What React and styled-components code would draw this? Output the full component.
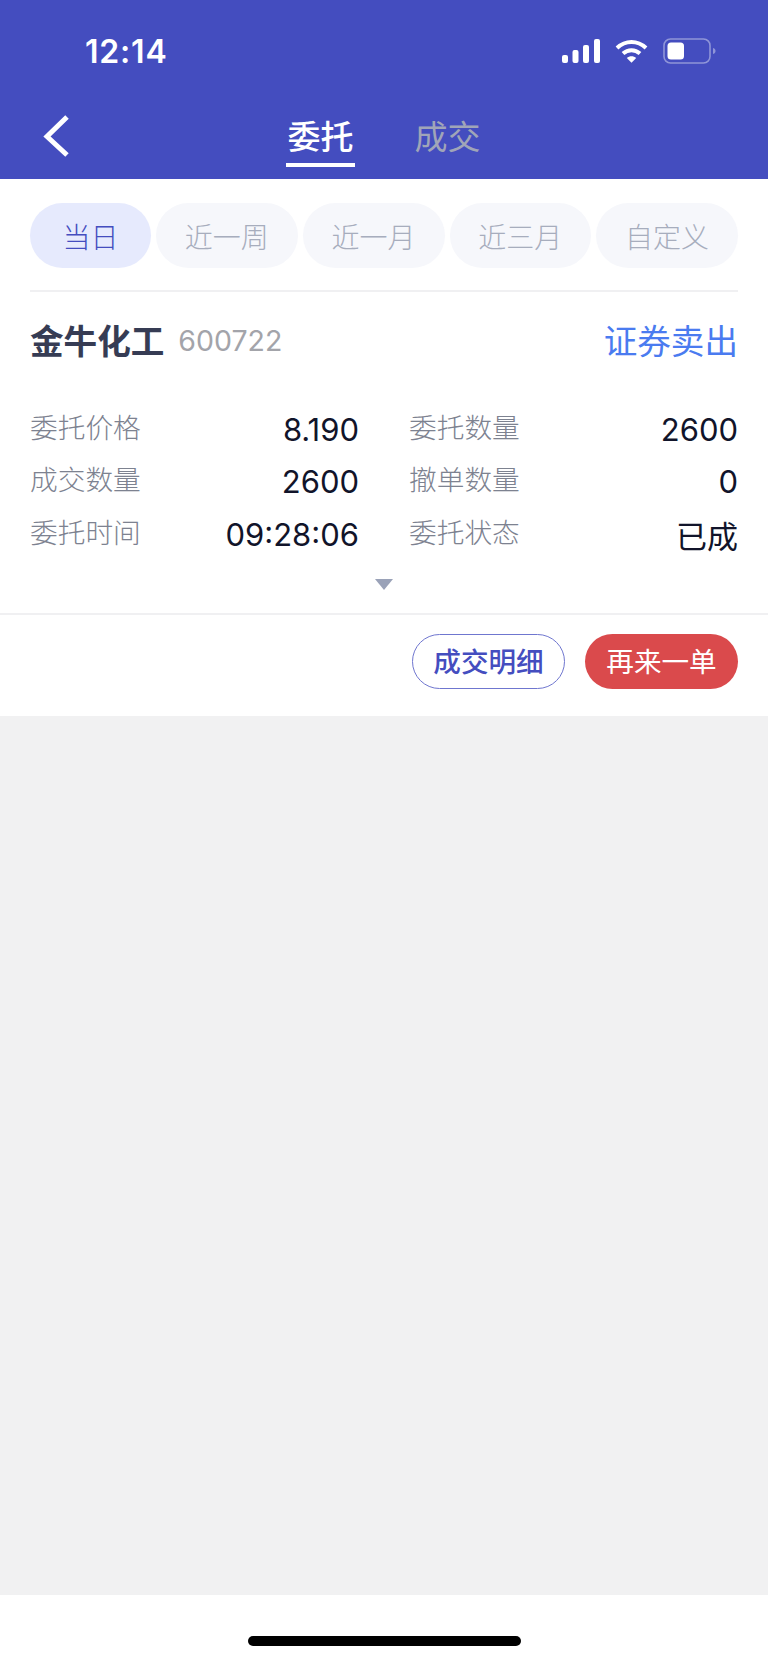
import React from "react";
import styled, { createGlobalStyle } from "styled-components";

const Global = createGlobalStyle`
  html, body { margin: 0; padding: 0; background: #fff; }
  * { box-sizing: border-box; }
  body { font-family: Inter, "Noto Sans CJK SC", sans-serif; }
`;

const Page = styled.div`
  width: 768px;
  height: 1663px;
  display: flex;
  flex-direction: column;
  background: #fff;
  overflow: hidden;
`;
const Header = styled.header`
  height: 179px;
  background: #444dbf;
  flex: none;
  display: flex;
  flex-direction: column;
`;
const StatusBar = styled.div`
  height: 102px;
  padding: 31px 52px 0 85px;
  display: flex;
  justify-content: space-between;
  align-items: flex-start;
`;
const Time = styled.div`
  color: #fff;
  font-size: 32px;
  line-height: 42px;
  font-weight: 600;
  letter-spacing: 0.8px;
`;
const StatusIcons = styled.div`
  display: flex;
  align-items: center;
  gap: 15px;
  height: 26px;
  margin-top: 7px;
`;
const NavBar = styled.nav`
  position: relative;
  flex: 1;
  display: flex;
  justify-content: center;
`;
const BackIcon = styled.svg`
  position: absolute;
  left: 42px;
  top: 12px;
`;
const Tabs = styled.div`
  display: flex;
  gap: 58px;
  margin-left: 0;
`;
const Tab = styled.div`
  width: 69px;
  height: 65px;
  padding-top: 9px;
  text-align: center;
  font-family: "Noto Sans CJK SC", sans-serif;
  font-size: 33px;
  line-height: 48px;
  font-weight: ${(p) => (p.$active ? 500 : 400)};
  color: ${(p) => (p.$active ? "#fff" : "#a0a5b8")};
  border-bottom: 4px solid ${(p) => (p.$active ? "#fff" : "transparent")};
`;
const Filters = styled.div`
  margin: 24px 30px 0;
  padding-bottom: 22px;
  border-bottom: 2px solid #f0f0f2;
  display: flex;
  gap: 5px;
`;
const Pill = styled.div`
  flex: ${(p) => (p.$active ? "0 0 121px" : "1 1 0")};
  height: 65px;
  border-radius: 33px;
  display: flex;
  align-items: center;
  justify-content: center;
  font-family: "Noto Sans CJK SC", sans-serif;
  font-size: 28px;
  font-weight: 300;
  background: ${(p) => (p.$active ? "#e6eafd" : "#f6f7fb")};
  color: ${(p) => (p.$active ? "#444dbf" : "#a7adbd")};
`;
const Card = styled.section`
  padding: 0 30px;
`;
const TitleRow = styled.div`
  height: 94px;
  display: flex;
  align-items: center;
  font-family: "Noto Sans CJK SC", sans-serif;
`;
const StockName = styled.div`
  font-size: 33.6px;
  font-weight: 700;
  color: #363c54;
`;
const StockCode = styled.div`
  margin-left: 14px;
  margin-top: 2px;
  font-family: Inter, sans-serif;
  font-size: 28.5px;
  color: #a3a4aa;
`;
const Side = styled.div`
  margin-left: auto;
  font-size: 33.6px;
  font-weight: 400;
  color: #4a7bf0;
`;
const Grid = styled.div`
  margin-top: 16px;
  display: grid;
  grid-template-columns: 329px 329px;
  column-gap: 50px;
  grid-auto-rows: 52.5px;
`;
const Cell = styled.div`
  display: flex;
  align-items: center;
  justify-content: space-between;
`;
const Label = styled.span`
  font-family: "Noto Sans CJK SC", sans-serif;
  font-size: 27.7px;
  font-weight: 300;
  color: #7d8290;
  margin-top: -5px;
`;
const Value = styled.span`
  font-family: Inter, "Noto Sans CJK SC", sans-serif;
  font-size: 31px;
  color: #11142a;
  margin-top: 2px;
`;
const Arrow = styled.div`
  margin: 19px auto 0;
  width: 0;
  height: 0;
  border-left: 9px solid transparent;
  border-right: 9px solid transparent;
  border-top: 11px solid #9aa2b8;
`;
const Actions = styled.div`
  margin-top: 23px;
  height: 103px;
  padding: 19px 30px 0;
  border-top: 2px solid #f0f0f2;
  display: flex;
  justify-content: flex-end;
  align-items: flex-start;
  gap: 20px;
`;
const Button = styled.button`
  width: 153px;
  height: 55px;
  padding: 0 0 3px;
  border-radius: 28px;
  font-family: "Noto Sans CJK SC", sans-serif;
  font-size: 27.6px;
  font-weight: ${(p) => (p.$primary ? 400 : 500)};
  background: ${(p) => (p.$primary ? "#da4a4c" : "#fff")};
  color: ${(p) => (p.$primary ? "#fff" : "#444dbf")};
  border: ${(p) => (p.$primary ? "none" : "1px solid #6f76cf")};
`;
const Empty = styled.div`
  flex: 1;
  background: #f1f1f2;
`;
const HomeArea = styled.div`
  height: 68px;
  flex: none;
  padding-top: 41px;
  display: flex;
  justify-content: center;
  align-items: flex-start;
`;
const HomeBar = styled.div`
  width: 273px;
  height: 10px;
  border-radius: 5px;
  background: #000;
`;

const rows = [
  ["委托价格", "8.190", "委托数量", "2600"],
  ["成交数量", "2600", "撤单数量", "0"],
  ["委托时间", "09:28:06", "委托状态", "已成"],
];
const ranges = ["当日", "近一周", "近一月", "近三月", "自定义"];

export default function App() {
  return (
    <Page>
      <Global />
      <Header>
        <StatusBar>
          <Time>12:14</Time>
          <StatusIcons>
            <svg width="38" height="24" viewBox="0 0 38 24" fill="#fff">
              <rect x="0" y="16" width="6" height="8" rx="2" />
              <rect x="10.5" y="11" width="6" height="13" rx="2" />
              <rect x="21" y="6" width="6" height="18" rx="2" />
              <rect x="32" y="0" width="6" height="24" rx="2" />
            </svg>
            <svg width="33" height="24" viewBox="0 0 33 24" fill="none" stroke="#fff" strokeWidth="4">
              <path d="M2 9C10.5 1 22.5 1 31 9" />
              <path d="M8 14.5C13 10 20 10 25 14.5" />
              <path d="M11.8 19L16.5 23.8L21.2 19C18.5 16.7 14.5 16.7 11.8 19Z" fill="#fff" stroke="none" />
            </svg>
            <svg width="53" height="26" viewBox="0 0 53 26" fill="none">
              <rect x="1" y="1" width="46" height="24" rx="6.5" stroke="#8f95d8" strokeWidth="1.6" />
              <rect x="4.5" y="4.5" width="16.5" height="17" rx="3.5" fill="#fff" />
              <path d="M50 10C52 10.7 52.5 11.8 52.5 13S52 15.3 50 16Z" fill="#8f95d8" />
            </svg>
          </StatusIcons>
        </StatusBar>
        <NavBar>
          <BackIcon width="28" height="44" viewBox="0 0 28 44" fill="none" stroke="#fff" strokeWidth="5">
            <path d="M25 3L5 22.5L25 41" />
          </BackIcon>
          <Tabs>
            <Tab $active>委托</Tab>
            <Tab>成交</Tab>
          </Tabs>
        </NavBar>
      </Header>
      <Filters>
        {ranges.map((r, i) => (
          <Pill key={r} $active={i === 0}>{r}</Pill>
        ))}
      </Filters>
      <Card>
        <TitleRow>
          <StockName>金牛化工</StockName>
          <StockCode>600722</StockCode>
          <Side>证券卖出</Side>
        </TitleRow>
        <Grid>
          {rows.map((r) => (
            <React.Fragment key={r[0]}>
              <Cell><Label>{r[0]}</Label><Value>{r[1]}</Value></Cell>
              <Cell><Label>{r[2]}</Label><Value>{r[3]}</Value></Cell>
            </React.Fragment>
          ))}
        </Grid>
        <Arrow />
      </Card>
      <Actions>
        <Button>成交明细</Button>
        <Button $primary>再来一单</Button>
      </Actions>
      <Empty />
      <HomeArea><HomeBar /></HomeArea>
    </Page>
  );
}
